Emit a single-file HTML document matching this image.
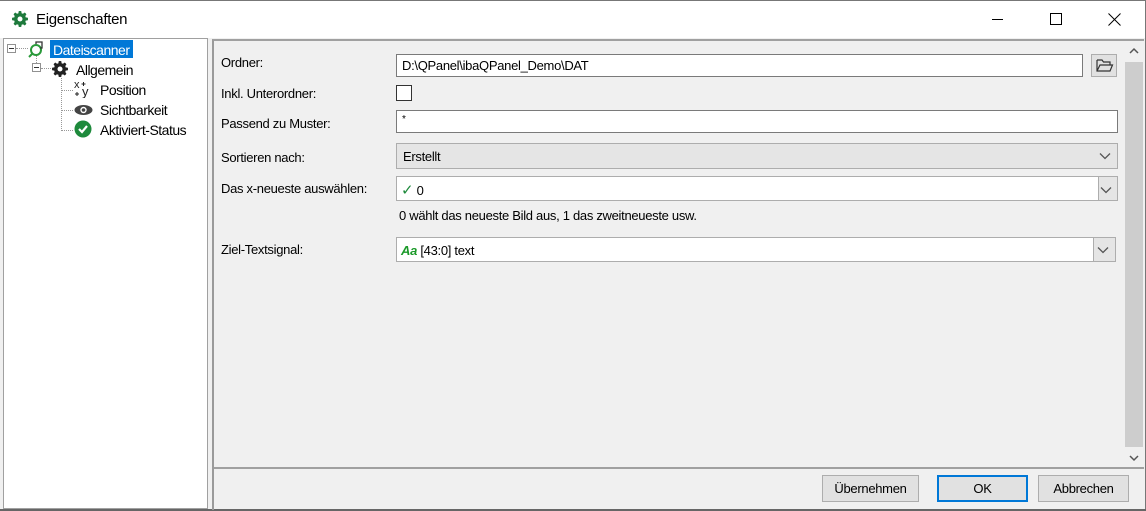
<!DOCTYPE html>
<html><head><meta charset="utf-8"><style>
*{margin:0;padding:0;box-sizing:border-box}
body{width:1146px;height:511px;background:#f0f0f0;font-family:"Liberation Sans",sans-serif;font-size:13px;color:#000;position:relative;overflow:hidden;letter-spacing:-0.3px}
.a{position:absolute}
.inp{position:absolute;background:#fff;border:1px solid #7a7a7a;height:23px;padding:3px 0 0 5px}
.cb{position:absolute;background:#fff;border:1px solid #adadad;height:23px}
.lbl{position:absolute;left:221px}
.btn{position:absolute;top:475px;height:27px;background:#e1e1e1;border:1px solid #adadad;text-align:center;line-height:25px}
.dd{position:absolute;right:0;top:0;width:19px;height:21px;background:#e5e5e5;border-left:1px solid #adadad}
.tree{position:absolute;white-space:nowrap}
</style></head><body>
<div class="a" style="left:0;top:0;width:1146px;height:38px;background:#fff;border-top:1px solid #777"></div>
<svg class="a" style="left:11px;top:10px" width="18" height="18" viewBox="0 0 18 18"><g fill="#1e7a3c"><circle cx="9" cy="9" r="6"/><rect x="7.5" y="1" width="3" height="16" rx="1"/><rect x="1" y="7.5" width="16" height="3" rx="1"/><rect x="7.5" y="1" width="3" height="16" rx="1" transform="rotate(45 9 9)"/><rect x="7.5" y="1" width="3" height="16" rx="1" transform="rotate(-45 9 9)"/></g><circle cx="9" cy="9" r="2.5" fill="#fff"/></svg>
<div class="a" style="left:36px;top:11px;font-size:15px">Eigenschaften</div>
<div class="a" style="left:992px;top:19px;width:11px;height:1px;background:#000"></div>
<div class="a" style="left:1050px;top:13px;width:12px;height:12px;border:1px solid #000"></div>
<svg class="a" style="left:1108px;top:13px" width="13" height="13"><path d="M0.5 0.5L12.5 12.5M12.5 0.5L0.5 12.5" stroke="#000"/></svg>
<div class="a" style="left:1145px;top:0;width:1px;height:511px;background:#777"></div>
<div class="a" style="left:0;top:509px;width:1146px;height:2px;background:#666"></div>

<!-- tree -->
<div class="a" style="left:3px;top:38px;width:205px;height:471px;background:#fff;border:1px solid #a0a0a0"></div>
<div class="a" style="left:7px;top:44px;width:9px;height:9px;border:1px solid #919191;background:#fff"><div style="margin:3px 1px;height:1px;background:#333"></div></div>
<div class="a" style="left:32px;top:63px;width:9px;height:9px;border:1px solid #919191;background:#fff"><div style="margin:3px 1px;height:1px;background:#333"></div></div>
<div class="a" style="left:16px;top:48px;width:12px;border-top:1px dotted #999"></div>
<div class="a" style="left:36px;top:55px;height:8px;border-left:1px dotted #999"></div>
<div class="a" style="left:41px;top:68px;width:10px;border-top:1px dotted #999"></div>
<div class="a" style="left:61px;top:78px;height:53px;border-left:1px dotted #999"></div>
<div class="a" style="left:61px;top:90px;width:12px;border-top:1px dotted #999"></div>
<div class="a" style="left:61px;top:110px;width:12px;border-top:1px dotted #999"></div>
<div class="a" style="left:61px;top:130px;width:12px;border-top:1px dotted #999"></div>
<svg class="a" style="left:28px;top:40px" width="18" height="18"><circle cx="8" cy="10" r="5" fill="none" stroke="#2a9a3a" stroke-width="2"/><path d="M4 14L1 17" stroke="#2a9a3a" stroke-width="2"/><path d="M8 4V2h6v6h-2" fill="none" stroke="#333" stroke-width="1.3"/></svg>
<div class="a" style="left:50px;top:40px;width:83px;height:18px;background:#0078d7"></div>
<div class="tree" style="left:53px;top:42px;color:#fff;font-size:14px;letter-spacing:-0.5px">Dateiscanner</div>
<svg class="a" style="left:51px;top:60px" width="18" height="18" viewBox="0 0 18 18"><g fill="#222"><circle cx="9" cy="9" r="6"/><rect x="7.5" y="1" width="3" height="16" rx="1"/><rect x="1" y="7.5" width="16" height="3" rx="1"/><rect x="7.5" y="1" width="3" height="16" rx="1" transform="rotate(45 9 9)"/><rect x="7.5" y="1" width="3" height="16" rx="1" transform="rotate(-45 9 9)"/></g><circle cx="9" cy="9" r="2.5" fill="#fff"/></svg>
<div class="tree" style="left:76px;top:62px;font-size:14px;letter-spacing:-0.5px">Allgemein</div>
<svg class="a" style="left:74px;top:80px" width="20" height="18"><text x="0" y="8" font-family="Liberation Sans" font-size="11" fill="#222">x</text><text x="8" y="16" font-family="Liberation Sans" font-size="13" fill="#222">y</text><path d="M9.5 2v4M7.5 4h4M3 12v4M1 14h4" stroke="#222" stroke-width="1"/></svg>
<div class="tree" style="left:100px;top:82px;font-size:14px;letter-spacing:-0.5px">Position</div>
<svg class="a" style="left:74px;top:104px" width="19" height="12"><ellipse cx="9.5" cy="6" rx="9" ry="5" fill="#444"/><circle cx="9.5" cy="6" r="3.2" fill="#fff"/><circle cx="9.5" cy="6" r="1.8" fill="#444"/></svg>
<div class="tree" style="left:100px;top:102px;font-size:14px;letter-spacing:-0.5px">Sichtbarkeit</div>
<svg class="a" style="left:74px;top:120px" width="18" height="18"><circle cx="9" cy="9" r="8.5" fill="#1e8a3c"/><path d="M5 9l3 3 5-6" fill="none" stroke="#fff" stroke-width="2.2"/></svg>
<div class="tree" style="left:100px;top:122px;font-size:14px;letter-spacing:-0.5px">Aktiviert-Status</div>

<!-- right panel -->
<div class="a" style="left:212px;top:39px;width:932px;height:471px;border-left:2px solid #9a9a9a;border-top:2px solid #a0a0a0"></div>
<div class="a" style="left:214px;top:467px;width:930px;height:2px;background:#a0a0a0"></div>
<div class="a" style="left:1124px;top:41px;width:20px;height:426px;background:#f0f0f0"></div>
<div class="a" style="left:1125px;top:62px;width:18px;height:385px;background:#cdcdcd"></div>
<svg class="a" style="left:1129px;top:47px" width="10" height="7"><path d="M1 6L5 2 9 6" fill="none" stroke="#555" stroke-width="1.5"/></svg>
<svg class="a" style="left:1129px;top:455px" width="10" height="7"><path d="M1 1L5 5 9 1" fill="none" stroke="#555" stroke-width="1.5"/></svg>

<div class="lbl" style="top:55px">Ordner:</div>
<div class="inp" style="left:396px;top:54px;width:687px">D:\QPanel\ibaQPanel_Demo\DAT</div>
<div class="a" style="left:1091px;top:54px;width:26px;height:23px;background:#e1e1e1;border:1px solid #adadad"></div>
<svg class="a" style="left:1096px;top:58px" width="18" height="15"><path d="M1 2h5l1.5 2H14v3M1 2v11h13l2.5-6H4L1 13" fill="none" stroke="#333" stroke-width="1.2"/></svg>
<div class="lbl" style="top:86px">Inkl. Unterordner:</div>
<div class="a" style="left:396px;top:85px;width:16px;height:16px;border:1px solid #333;background:#fff"></div>
<div class="lbl" style="top:116px">Passend zu Muster:</div>
<div class="inp" style="left:396px;top:110px;width:722px;height:23px;font-size:10px">*</div>
<div class="lbl" style="top:150px">Sortieren nach:</div>
<div class="a" style="left:396px;top:143px;width:722px;height:26px;background:#e5e5e5;border:1px solid #adadad;padding:5px 0 0 6px">Erstellt</div>
<svg class="a" style="left:1099px;top:152px" width="12" height="8"><path d="M1 1.5L6 6.5 11 1.5" fill="none" stroke="#555" stroke-width="1.3"/></svg>
<div class="lbl" style="top:181px">Das x-neueste auswählen:</div>
<div class="cb" style="left:396px;top:176px;width:722px;height:25px;padding:4px 0 0 4px"><span style="color:#1e8a3c;font-size:15px">✓</span> 0<div class="dd" style="height:23px"></div></div>
<svg class="a" style="left:1100px;top:186px" width="12" height="8"><path d="M1 1.5L6 6.5 11 1.5" fill="none" stroke="#555" stroke-width="1.3"/></svg>
<div class="a" style="left:399px;top:208px">0 wählt das neueste Bild aus, 1 das zweitneueste usw.</div>
<div class="lbl" style="top:242px">Ziel-Textsignal:</div>
<div class="cb" style="left:396px;top:237px;width:720px;height:25px;padding:5px 0 0 4px"><b style="color:#1c9a2a;font-style:italic">Aa</b> [43:0] text<div class="dd" style="width:22px;height:23px"></div></div>
<svg class="a" style="left:1097px;top:246px" width="12" height="8"><path d="M1 1.5L6 6.5 11 1.5" fill="none" stroke="#555" stroke-width="1.3"/></svg>

<div class="btn" style="left:822px;width:97px">Übernehmen</div>
<div class="btn" style="left:937px;width:91px;border:2px solid #0078d7;line-height:23px">OK</div>
<div class="btn" style="left:1038px;width:91px">Abbrechen</div>
</body></html>
